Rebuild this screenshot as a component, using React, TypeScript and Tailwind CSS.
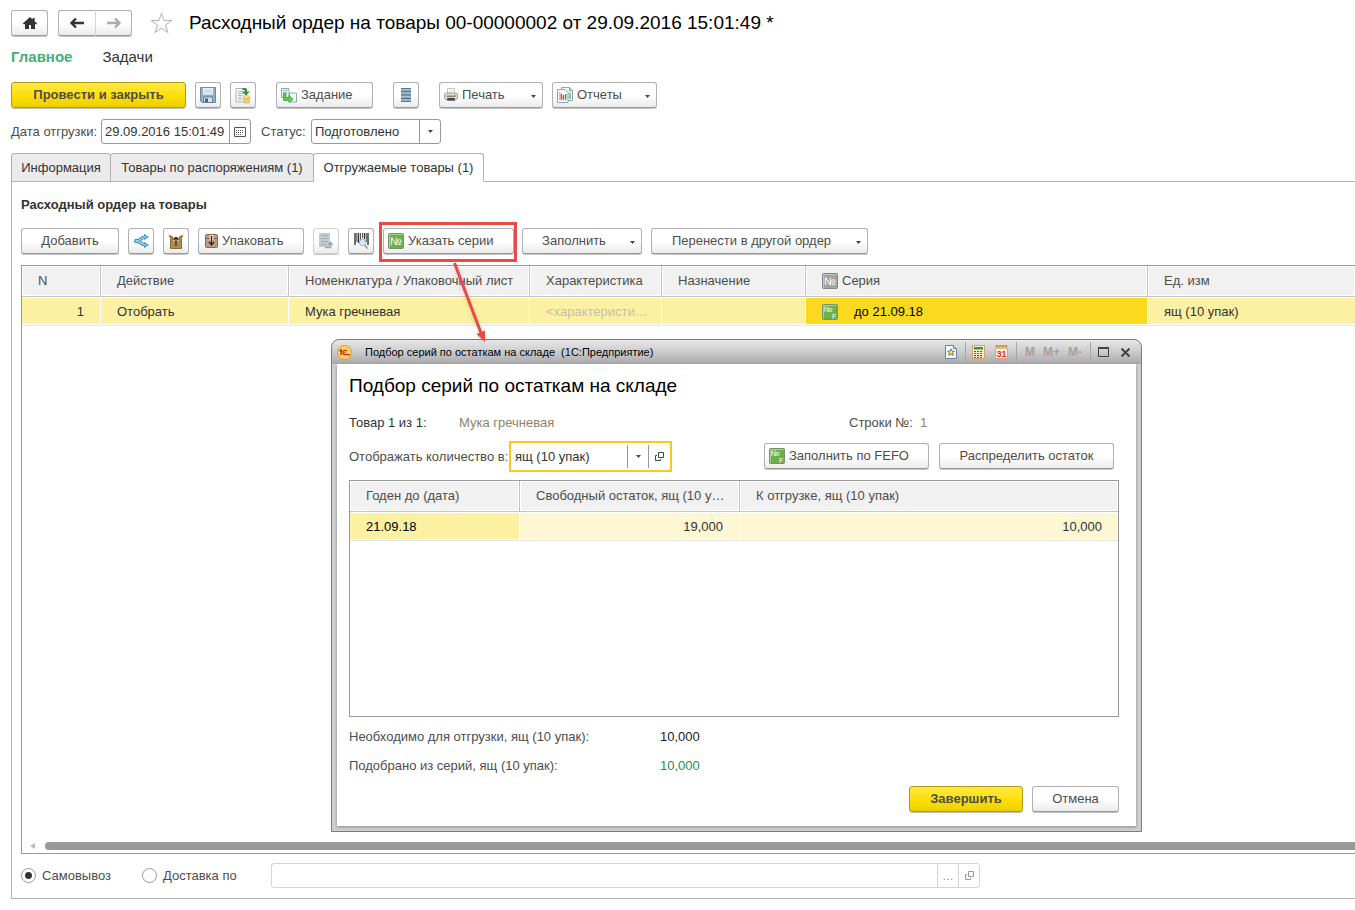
import React, { useState } from 'react';
import clsx from 'clsx';

/* ---------- icons ---------- */

const HomeIcon = () => (
  <svg width="16" height="14" viewBox="0 0 16 14" fill="#333">
    <path d="M8 1 0.800 7.600 2 8.600 3 7.800V13h4V9h2v4h4V7.800l1 .8 1.200-1L12.600 5.200V2h-2v1.400z" />
  </svg>
);

const ArrowIcon = ({ flip, color }: { flip?: boolean; color: string }) => (
  <svg width="16" height="12" viewBox="0 0 16 12" fill="none" stroke={color} strokeWidth="2.400">
    {flip ? <path d="M1 6h12.500M9 1.500 13.500 6 9 10.500" /> : <path d="M15 6H2.500M7 1.500 2.500 6 7 10.500" />}
  </svg>
);

const StarIcon = () => (
  <svg width="23" height="22" viewBox="0 0 23 22" fill="#fff" stroke="#b0b0b0">
    <path d="M11.500 1.200 14 8.500h7.800l-6.300 4.600 2.500 7.500-6.500-4.600L5 20.600l2.500-7.500L1.200 8.500H9z" />
  </svg>
);

const SaveIcon = () => (
  <svg width="16" height="16" viewBox="0 0 16 16">
    <path d="M.5.5h15v15H2L.5 14z" fill="#8fb0c8" stroke="#6a8ba3" />
    <path d="M3 1h10v6.500H3z" fill="#edf3f7" />
    <path d="M4 3h8M4 5h8" stroke="#b3c9d8" />
    <path d="M3.500 10h9v5.500h-9z" fill="#d9e0e4" stroke="#5a7488" strokeWidth=".8" />
    <path d="M5 11.500h3v3.500H5z" fill="#4a6274" />
  </svg>
);

const PostIcon = () => (
  <svg width="16" height="17" viewBox="0 0 16 17">
    <path d="M1 1.500h10v13.500H1z" fill="#f6f9fb" stroke="#a3b7c5" />
    <path d="M3 4.500h5M3 6.500h6M3 8.500h5M3 10.500h4M3 12.500h4" stroke="#a3bccc" />
    <path d="M7.500 1h2.500c1.500 0 2 .8 2 2v1.500h3L11 8.500 7 4.500h2.700V3H7.500z" fill="#3b9136" />
    <path d="M8 10v5c0 2 7 2 7 0v-5z" fill="#f0bd45" />
    <ellipse cx="11.500" cy="10" rx="3.500" ry="1.500" fill="#fde39a" stroke="#dca636" strokeWidth=".6" />
    <path d="M8 12.500c0 2 7 2 7 0" fill="none" stroke="#fbe8b0" strokeWidth=".8" />
  </svg>
);

const TaskIcon = () => (
  <svg width="16" height="15" viewBox="0 0 16 15">
    <path d="M.5.5h7.500v9H.500z" fill="#e8f1f7" stroke="#8ca9bd" />
    <path d="M2 2.500h4.500M2 4.500h4.500" stroke="#a3bfd2" />
    <path d="M8.500 5h7v9h-7z" fill="#f2f7fa" stroke="#8ca9bd" />
    <path d="M2.500 5.500H5v4.700h3V7.500l4 3.800-4 3.300v-2.200H2.500z" fill="#5fd04c" stroke="#37a12c" strokeWidth=".8" />
  </svg>
);

const RegisterIcon = () => (
  <svg width="10" height="14" viewBox="0 0 10 14">
    <path d="M0 0h10v14H0z" fill="#8dabc1" />
    <path d="M0 1.500h10M0 5h10M0 8.500h10M0 12h10" stroke="#a9c2d4" />
    <path d="M0 .5h10M0 3.500h10M0 7h10M0 10.500h10M0 13.500h10" stroke="#55788f" />
  </svg>
);

const PrinterIcon = () => (
  <svg width="14" height="14" viewBox="0 0 14 14">
    <path d="M3.500.5h7v5h-7z" fill="#fff" stroke="#c4c4c4" />
    <path d="M5 2.500h4M5 4h4" stroke="#ddd" strokeWidth=".7" />
    <rect x=".5" y="5" width="13" height="6.500" rx="2" fill="#dedad8" stroke="#a39d9a" />
    <path d="M2.500 7.500h9V9h-9z" fill="#8a827e" />
    <path d="M3 9.500h8l.5 3.500h-9z" fill="#4b4340" stroke="#f4eeeb" strokeWidth=".7" />
    <circle cx="11.500" cy="7" r=".8" fill="#eb9a5c" />
  </svg>
);

const ReportIcon = () => (
  <svg width="16" height="16" viewBox="0 0 16 16">
    <path d="M4.500.5h8l3 3v10h-11z" fill="#f1f6fa" stroke="#86a6bb" />
    <path d="M12.500.5v3h3" fill="none" stroke="#86a6bb" />
    <path d="M13 5.500v6.500" stroke="#6db368" strokeWidth="1.400" />
    <path d="M.5 2.500h7.500l3 3v10H.500z" fill="#fff" stroke="#86a6bb" />
    <path d="M2.500 5v8h7" fill="none" stroke="#b5cad8" />
    <path d="M4.300 6.500v6" stroke="#dd473c" strokeWidth="1.600" />
    <path d="M6.500 8v4.500" stroke="#9b5550" strokeWidth="1.400" />
    <path d="M8.700 7v5.500" stroke="#4fa54a" strokeWidth="1.600" />
  </svg>
);

const CalendarIcon = () => (
  <svg width="12" height="10" viewBox="0 0 12 10" fill="none">
    <path d="M.5.5h11v9H.500z" stroke="#555" />
    <path d="M2 3.500h8M2 5.500h8M2 7.500h6" stroke="#555" strokeDasharray="1 1" />
  </svg>
);

const ShareIcon = () => (
  <svg width="15" height="14" viewBox="0 0 15 14" fill="none">
    <path d="M11.500 3C7 3 6.500 7 2.500 7 6.500 7 7 11 11.500 11" stroke="#3585b5" strokeWidth="3.200" />
    <path d="M10 0v6l4.800-3zM10 8v6l4.800-3z" fill="#3585b5" />
    <circle cx="2.500" cy="7" r="2.300" fill="#3585b5" />
    <path d="M12 3C7 3 6.500 7 2.500 7 6.500 7 7 11 12 11" stroke="#93d2f1" strokeWidth="1.400" />
    <path d="M10.800 1.500v3l2.400-1.500zM10.800 9.500v3l2.400-1.500z" fill="#93d2f1" />
    <circle cx="2.600" cy="7" r="1.300" fill="#93d2f1" />
  </svg>
);

const UnpackIcon = () => (
  <svg width="16" height="15" viewBox="0 0 16 15">
    <path d="M2.500 4h11v10.500h-11z" fill="#b08b56" stroke="#8c6936" />
    <path d="M2.500 4.500.5 2 2 1l3 1.500-.5 2zM13.500 4.500l2-2.500L14 1l-3 1.500.5 2z" fill="#a17a42" />
    <path d="M5 4.500h6V7H5z" fill="#e9d9b8" />
    <path d="M8 12V3.500M5.500 6 8 3.300 10.500 6" fill="none" stroke="#33280f" strokeWidth="1.200" />
  </svg>
);

const PackIcon = () => (
  <svg width="13" height="14" viewBox="0 0 13 14">
    <rect x=".5" y=".5" width="12" height="13" rx="1" fill="#bd9a82" stroke="#8a6853" />
    <path d="M1 4.500h11" stroke="#8a6853" />
    <path d="M4.500 1h4v5.500h-4z" fill="#e6d6c9" />
    <path d="M6.500 2v8.500M4 8l2.500 2.800L9 8" fill="none" stroke="#33221a" strokeWidth="1.200" />
  </svg>
);

const ListUpIcon = () => (
  <svg width="14" height="16" viewBox="0 0 14 16">
    <path d="M0 0h11v14H0z" fill="#c3cbd1" />
    <path d="M2 2.500h7M2 5.500h7M2 8.500h7M2 11.500h5" stroke="#a3afb8" />
    <path d="M6 14.500h5.500V10M9 12l2.500-2.500L14 12" fill="none" stroke="#98a7b3" strokeWidth="1.500" />
  </svg>
);

const BarcodeIcon = () => (
  <svg width="15" height="16" viewBox="0 0 15 16">
    <path d="M1 0v12M4.500 0v10M10.500 0v6M14 0v12" stroke="#333" strokeWidth="1.400" />
    <path d="M2.800 0v9M6.500 0v8M8.500 0v5M12.300 0v9" stroke="#555" />
    <path d="m10.500 12 3 3.500" stroke="#c99471" strokeWidth="1.800" />
    <circle cx="8.500" cy="9.500" r="3.200" fill="#d9eaf8" stroke="#a3b4c6" />
  </svg>
);

const SeriesIcon = ({ gray, fefo }: { gray?: boolean; fefo?: boolean }) => (
  <svg width="16" height="16" viewBox="0 0 16 16" className="shrink-0" fill="#fff" fontFamily="Liberation Sans, Arial, sans-serif">
    <rect x=".5" y=".5" width="15" height="15" rx="1" fill={gray ? '#a3a3a3' : '#6cb04c'} stroke={gray ? '#858585' : '#74936a'} />
    <path d="M1.500 14.500v-13h13" fill="none" stroke={gray ? '#c4c4c4' : '#a4d48d'} />
    {fefo ? (
      <>
        <text x="1.500" y="8" fontSize="8">№</text>
        <text x="10" y="14.500" fontSize="7">F</text>
      </>
    ) : (
      <text x="8" y="12" fontSize="11" textAnchor="middle">№</text>
    )}
  </svg>
);

const OpenIcon = ({ color }: { color: string }) => (
  <svg width="9" height="9" viewBox="0 0 9 9" fill="none" stroke={color}>
    <path d="M3.500.5h5v5h-5zM2 3.500H.500v5h5V7" />
  </svg>
);

const Caret = () => (
  <svg width="5" height="3" viewBox="0 0 5 3" fill="#444">
    <path d="M0 0h5L2.500 3z" />
  </svg>
);

const LogoIcon = () => (
  <svg width="15" height="15" viewBox="0 0 15 15" fill="none">
    <circle cx="7.500" cy="7.500" r="7" fill="#fbd65a" stroke="#d59a3a" />
    <path d="M2.500 6.200 4.200 5v5" stroke="#d9231c" strokeWidth="1.500" />
    <path d="M9.800 6A2.200 2.200 0 1 0 8 9.700h5" stroke="#d9231c" strokeWidth="1.300" />
    <circle cx="8" cy="7.600" r=".7" fill="#d9231c" />
  </svg>
);

const FavoriteIcon = () => (
  <svg width="12" height="14" viewBox="0 0 12 14">
    <path d="M.5.5h8l3 3v10H.500z" fill="#f3f8fc" stroke="#5f87a8" />
    <path d="M8.500.5v3h3" fill="#cfe0ee" stroke="#5f87a8" />
    <path d="m6 3.800 1 2.300 2.500.2-1.900 1.600.6 2.500L6 9.100l-2.200 1.300.6-2.500L2.500 6.300 5 6.100z" fill="#f7d878" stroke="#5b5138" strokeWidth=".7" />
  </svg>
);

const CalculatorIcon = () => (
  <svg width="13" height="14" viewBox="0 0 13 14">
    <path d="M.5.5h12v13H.500z" fill="#fbeec7" stroke="#cfa36a" />
    <path d="M2 2h9v2.500H2z" fill="#3d9432" />
    <path d="M2 6.500h9M2 8.500h9M2 10.500h9M2 12.300h9" stroke="#5d574a" strokeDasharray="2 1" />
  </svg>
);

const DayIcon = () => (
  <svg width="13" height="14" viewBox="0 0 13 14">
    <path d="M.5 1h12v12.500H.500z" fill="#fdf3d8" stroke="#d3a56a" />
    <path d="M0 1h13v3H0z" fill="#ecb878" />
    <path d="M2 0v2M5 0v2M8 0v2M11 0v2" stroke="#8e6b3c" />
    <text x="6.500" y="12" fontSize="9" fontWeight="bold" textAnchor="middle" fill="#e02e20" fontFamily="Liberation Sans, Arial, sans-serif">31</text>
  </svg>
);

/* ---------- controls ---------- */

interface ToolButtonProps {
  children?: React.ReactNode;
  icon?: React.ReactNode;
  label?: string;
  menu?: boolean;
  primary?: boolean;
  disabled?: boolean;
  className?: string;
}

const ToolButton = ({ children, icon, label, menu, primary, disabled, className }: ToolButtonProps) => (
  <button
    type="button"
    aria-label={label}
    disabled={disabled}
    className={clsx(
      'relative flex h-[26px] shrink-0 items-center gap-1 rounded-[3px] border whitespace-nowrap shadow-[0_1px_0_#c4c4c4]',
      primary
        ? 'justify-center border-[#b39a12] bg-linear-to-b from-[#ffe93f] via-[#ffe000] to-[#ecd000] font-bold text-[#4d4d4d]'
        : 'bg-linear-to-b from-white from-50% to-[#ebebeb] text-[#4d4d4d]',
      !primary && (disabled ? 'border-[#d0d0d0]' : 'border-[#b0b0b0] border-b-[#999]'),
      icon && children ? 'pl-1' : 'justify-center',
      className,
    )}
  >
    {icon}
    {children && <span className={clsx(menu && !icon && 'pr-4')}>{children}</span>}
    {menu && (
      <span className="absolute top-3 right-[6px]">
        <Caret />
      </span>
    )}
  </button>
);

const th = 'h-[31px] truncate border-r border-b border-[#c4c4c4] bg-[#f1f1f1] pr-3 pl-4 text-left font-normal text-[#4d4d4d] shadow-[inset_0_0_0_1px_white]';
const td = 'h-[29px] truncate border-r border-b border-r-white border-b-[#e4e4e4] pt-[2px] pl-4 text-[#333] shadow-[inset_0_1px_0_white,inset_0_-1px_0_white]';

const orderTabs = ['Информация', 'Товары по распоряжениям (1)', 'Отгружаемые товары (1)'];

/* ---------- series dialog ---------- */

const SeriesDialog = () => (
  <div
    role="dialog"
    aria-labelledby="dialog-title"
    className="absolute top-[339px] left-[331px] z-10 w-[811px] rounded-t-lg border border-[#7c7c7f] bg-[#cfcfd1] px-[5px] pb-[5px]"
  >
    <div className="-mx-[5px] flex h-6 items-center rounded-t-lg bg-linear-to-b from-[#e8e8e9] via-[#cbcbcd] to-[#a9a9ac] pr-[11px] pl-[5px] text-xs text-black">
      <LogoIcon />
      <span className="ml-[13px] flex-1 text-[11px] whitespace-pre">Подбор серий по остаткам на складе  (1С:Предприятие)</span>
      <button type="button" aria-label="В избранное" className="mr-2"><FavoriteIcon /></button>
      <div className="flex h-5 items-center gap-[10px] border-l border-[#a5a5a8] pr-2 pl-[6px]">
        <button type="button" aria-label="Калькулятор"><CalculatorIcon /></button>
        <button type="button" aria-label="Календарь"><DayIcon /></button>
      </div>
      <div className="flex h-5 items-center gap-2 border-l border-[#a5a5a8] pr-2 pl-2 font-bold text-[#aa9f99]">
        <button type="button">M</button>
        <button type="button">M+</button>
        <button type="button">M-</button>
      </div>
      <div className="flex h-5 items-center gap-3 border-l border-[#a5a5a8] pl-[7px]">
        <button type="button" aria-label="Развернуть">
          <svg width="11" height="10" viewBox="0 0 11 10" fill="none" stroke="#444">
            <path d="M.5 1v8.500h10V1" />
            <path d="M0 1h11" strokeWidth="2" />
          </svg>
        </button>
        <button type="button" aria-label="Закрыть">
          <svg width="9" height="9" viewBox="0 0 9 9" stroke="#444" strokeWidth="2">
            <path d="m.5.500 8 8M8.500.500l-8 8" />
          </svg>
        </button>
      </div>
    </div>

    <div className="bg-white pr-[17px] pb-[14px] pl-3 shadow-[0_1px_3px_#888]">
      <h2 id="dialog-title" className="pt-[10px] text-[19px] leading-6 text-black">Подбор серий по остаткам на складе</h2>

      <div className="mt-[15px] flex h-5 items-center">
        <span className="w-[110px] text-[#333]">Товар 1 из 1:</span>
        <span className="w-[390px] text-[#8a8468]">Мука гречневая</span>
        <span className="w-[71px]">Строки №:</span>
        <span className="text-[#8a8468]">1</span>
      </div>

      <div className="mt-2 flex h-[31px] items-center">
        <label htmlFor="unit" className="w-[160px] whitespace-nowrap">Отображать количество в:</label>
        <div className="flex h-[31px] w-[163px] items-center border-2 border-[#fcc81c]">
          <div className="relative h-[23px] flex-1">
            <select id="unit" className="h-full w-full appearance-none pl-1 text-[#333] outline-none">
              <option>ящ (10 упак)</option>
            </select>
            <span className="pointer-events-none absolute inset-y-0 right-0 flex w-[21px] items-center justify-center border-l border-[#999]">
              <Caret />
            </span>
          </div>
          <button type="button" aria-label="Открыть" className="flex h-[23px] w-[22px] items-center justify-center border-l border-[#999]">
            <OpenIcon color="#444" />
          </button>
        </div>
        <div className="ml-auto flex gap-[10px] pr-[5px] pb-[2px]">
          <ToolButton icon={<SeriesIcon fefo />} className="w-[165px]">Заполнить по FEFO</ToolButton>
          <ToolButton className="w-[175px]">Распределить остаток</ToolButton>
        </div>
      </div>

      <div className="mt-2 h-[237px] border border-[#999]">
        <table className="w-full table-fixed border-separate border-spacing-0">
          <colgroup>
            <col className="w-[170px]" />
            <col className="w-[220px]" />
            <col />
          </colgroup>
          <thead>
            <tr>
              <th className={th}>Годен до (дата)</th>
              <th className={th}>Свободный остаток, ящ (10 упак)</th>
              <th className={clsx(th, 'border-r-0')}>К отгрузке, ящ (10 упак)</th>
            </tr>
          </thead>
          <tbody>
            <tr>
              <td className={clsx(td, 'bg-[#fcf0a2] text-black')}>21.09.18</td>
              <td className={clsx(td, 'bg-[#fdf7d3] pr-4 text-right')}>19,000</td>
              <td className={clsx(td, 'border-r-0 bg-[#fdf7d3] pr-4 text-right')}>10,000</td>
            </tr>
          </tbody>
        </table>
      </div>

      <dl className="mt-[10px] grid grid-cols-[311px_auto] gap-y-[9px] leading-5">
        <dt>Необходимо для отгрузки, ящ (10 упак):</dt>
        <dd className="text-[#222]">10,000</dd>
        <dt>Подобрано из серий, ящ (10 упак):</dt>
        <dd className="text-[#2b8a57]">10,000</dd>
      </dl>

      <div className="mt-[10px] flex justify-end gap-[9px]">
        <ToolButton primary className="w-[114px]">Завершить</ToolButton>
        <ToolButton className="w-[87px]">Отмена</ToolButton>
      </div>
    </div>
  </div>
);

/* ---------- page ---------- */

export default function App() {
  const [tab, setTab] = useState(2);
  const [delivery, setDelivery] = useState('pickup');

  const radio =
    'size-[15px] appearance-none rounded-full border border-[#999] bg-white checked:bg-[radial-gradient(circle,#333_3px,white_4px)]';

  return (
    <div className="relative flex min-h-screen flex-col overflow-hidden bg-white pt-[10px] pb-[11px] pl-[11px] font-['Liberation_Sans',Arial,sans-serif] text-[13px] text-[#4d4d4d]">
      <header className="flex h-[26px] items-center">
        <ToolButton icon={<HomeIcon />} label="Домой" className="w-[37px]" />
        <div className="ml-[10px] flex">
          <ToolButton icon={<ArrowIcon color="#333" />} label="Назад" className="w-[38px] rounded-r-none border-r-[#d4d4d4]" />
          <ToolButton icon={<ArrowIcon flip color="#aaa" />} label="Вперед" className="w-9 rounded-l-none border-l-0" />
        </div>
        <button type="button" aria-label="Избранное" className="ml-[18px]"><StarIcon /></button>
        <h1 className="ml-4 pt-px text-[19px] whitespace-nowrap text-black">
          Расходный ордер на товары 00-00000002 от 29.09.2016 15:01:49 *
        </h1>
      </header>

      <nav className="mt-[10px] flex h-[22px] items-center gap-[30px] text-[15px]">
        <a href="#main" className="font-bold text-[#42b078]">Главное</a>
        <a href="#tasks" className="text-[#333]">Задачи</a>
      </nav>

      <div className="mt-[14px] flex">
        <ToolButton primary className="w-[175px]">Провести и закрыть</ToolButton>
        <ToolButton icon={<SaveIcon />} label="Записать" className="ml-[9px] w-[26px]" />
        <ToolButton icon={<PostIcon />} label="Провести" className="ml-[9px] w-[26px]" />
        <ToolButton icon={<TaskIcon />} className="ml-5 w-[97px]">Задание</ToolButton>
        <ToolButton icon={<RegisterIcon />} label="Движения" className="ml-5 w-[26px]" />
        <ToolButton icon={<PrinterIcon />} menu className="ml-5 w-[104px]">Печать</ToolButton>
        <ToolButton icon={<ReportIcon />} menu className="ml-[9px] w-[105px]">Отчеты</ToolButton>
      </div>

      <div className="mt-[11px] flex h-[25px] items-center">
        <label htmlFor="ship-date" className="w-[90px] whitespace-nowrap">Дата отгрузки:</label>
        <div className="flex h-[25px] w-[150px] rounded-[3px] border border-[#999]">
          <input id="ship-date" type="text" defaultValue="29.09.2016 15:01:49" className="min-w-0 flex-1 pl-[3px] text-[#333] outline-none" />
          <button type="button" aria-label="Выбрать дату" className="flex w-[21px] items-center justify-center border-l border-[#999]">
            <CalendarIcon />
          </button>
        </div>
        <label htmlFor="status" className="ml-[10px] w-[50px]">Статус:</label>
        <div className="relative h-[25px] w-[130px] rounded-[3px] border border-[#999]">
          <select id="status" className="h-full w-full appearance-none pl-[3px] text-[#333] outline-none">
            <option>Подготовлено</option>
          </select>
          <span className="pointer-events-none absolute inset-y-0 right-0 flex w-[21px] items-center justify-center border-l border-[#999]">
            <Caret />
          </span>
        </div>
      </div>

      <div role="tablist" className="z-1 mt-[9px] -mb-px flex h-[29px]">
        {orderTabs.map((name, i) => (
          <button
            key={name}
            type="button"
            role="tab"
            aria-selected={tab === i}
            onClick={() => setTab(i)}
            className={clsx(
              'rounded-t-[3px] border border-[#b0b0b0] text-center whitespace-nowrap text-[#333]',
              i > 0 && '-ml-px',
              i === 0 && 'w-[100px]',
              i === 1 && 'w-[204px]',
              i === 2 && 'w-[171px]',
              tab === i ? 'border-b-white bg-white' : 'bg-[#ebebeb]',
            )}
          >
            {name}
          </button>
        ))}
      </div>

      <main className="flex flex-1 flex-col border-y border-l border-[#b0b0b0] pt-[13px] pb-[10px] pl-[9px]">
        <h2 className="leading-5 font-bold text-[#333]">Расходный ордер на товары</h2>

        <div className="mt-[13px] flex gap-[9px]">
          <ToolButton className="w-[98px]">Добавить</ToolButton>
          <ToolButton icon={<ShareIcon />} label="Разбить строку" className="w-[26px]" />
          <ToolButton icon={<UnpackIcon />} label="Распаковать" className="w-[26px]" />
          <ToolButton icon={<PackIcon />} className="w-[106px] pl-[6px]">Упаковать</ToolButton>
          <ToolButton icon={<ListUpIcon />} label="Перенести" disabled className="w-[26px]" />
          <ToolButton icon={<BarcodeIcon />} label="Поиск по штрихкоду" className="w-[26px]" />
          <div className="relative mr-[-1px]">
            <ToolButton icon={<SeriesIcon />} className="w-[131px]">Указать серии</ToolButton>
            {/* callout frame and arrow to the dialog */}
            <div className="pointer-events-none absolute -top-[6px] -right-[3px] -left-1 h-10 border-3 border-[#e94b44]" />
            <svg width="40" height="84" viewBox="0 0 40 84" className="pointer-events-none absolute top-[34px] left-[67px] z-20 drop-shadow-sm">
              <path d="M4.500 1 31 71" stroke="#e94b44" strokeWidth="3" />
              <path d="m26.500 72 8.500-3.500V80z" fill="#e94b44" />
            </svg>
          </div>
          <ToolButton menu className="w-[120px]">Заполнить</ToolButton>
          <ToolButton menu className="w-[217px]">Перенести в другой ордер</ToolButton>
        </div>

        <div className="mt-[11px] flex flex-1 flex-col justify-between border-y border-l border-[#999]">
          <table className="w-full table-fixed border-separate border-spacing-0">
            <colgroup>
              <col className="w-[79px]" />
              <col className="w-[188px]" />
              <col className="w-[241px]" />
              <col className="w-[132px]" />
              <col className="w-[144px]" />
              <col className="w-[342px]" />
              <col />
            </colgroup>
            <thead>
              <tr>
                <th className={th}>N</th>
                <th className={th}>Действие</th>
                <th className={th}>Номенклатура / Упаковочный лист</th>
                <th className={th}>Характеристика</th>
                <th className={th}>Назначение</th>
                <th className={th}>
                  <span className="flex items-center gap-1"><SeriesIcon gray />Серия</span>
                </th>
                <th className={clsx(th, 'border-r-0')}>Ед. изм</th>
              </tr>
            </thead>
            <tbody>
              <tr className="bg-[#fcf0a2]">
                <td className={clsx(td, 'pr-4 text-right')}>1</td>
                <td className={td}>Отобрать</td>
                <td className={td}>Мука гречневая</td>
                <td className={clsx(td, 'pr-3 text-[#c4c0ae]')}>&lt;характеристика&gt;</td>
                <td className={td} />
                <td className={clsx(td, 'bg-[#fbd91f] text-black')}>
                  <span className="flex items-center gap-4"><SeriesIcon fefo />до 21.09.18</span>
                </td>
                <td className={clsx(td, 'border-r-0')}>ящ (10 упак)</td>
              </tr>
            </tbody>
          </table>
          <div className="mb-[3px] flex h-2 items-center pl-2">
            <svg width="5" height="6" viewBox="0 0 5 6" fill="#bbb"><path d="M5 0v6L0 3z" /></svg>
            <div className="ml-[10px] h-2 flex-1 rounded-l-full bg-[#999]" />
          </div>
        </div>

        <div className="mt-[9px] flex h-[25px] items-center">
          <input id="pickup" type="radio" name="delivery" className={radio} checked={delivery === 'pickup'} onChange={() => setDelivery('pickup')} />
          <label htmlFor="pickup" className="ml-[6px] w-[100px]">Самовывоз</label>
          <input id="courier" type="radio" name="delivery" className={radio} checked={delivery === 'courier'} onChange={() => setDelivery('courier')} />
          <label htmlFor="courier" className="ml-[6px] w-[108px]">Доставка по</label>
          <div className="flex h-[25px] w-[709px] rounded-[3px] border border-[#d4d4d4]">
            <input type="text" aria-label="Доставка по" className="min-w-0 flex-1 outline-none" />
            <button type="button" aria-label="Выбрать" className="w-[21px] border-l border-[#d4d4d4] text-[#999]">...</button>
            <button type="button" aria-label="Открыть" className="flex w-[21px] items-center justify-center border-l border-[#d4d4d4]">
              <OpenIcon color="#999" />
            </button>
          </div>
        </div>
      </main>

      <SeriesDialog />
    </div>
  );
}
